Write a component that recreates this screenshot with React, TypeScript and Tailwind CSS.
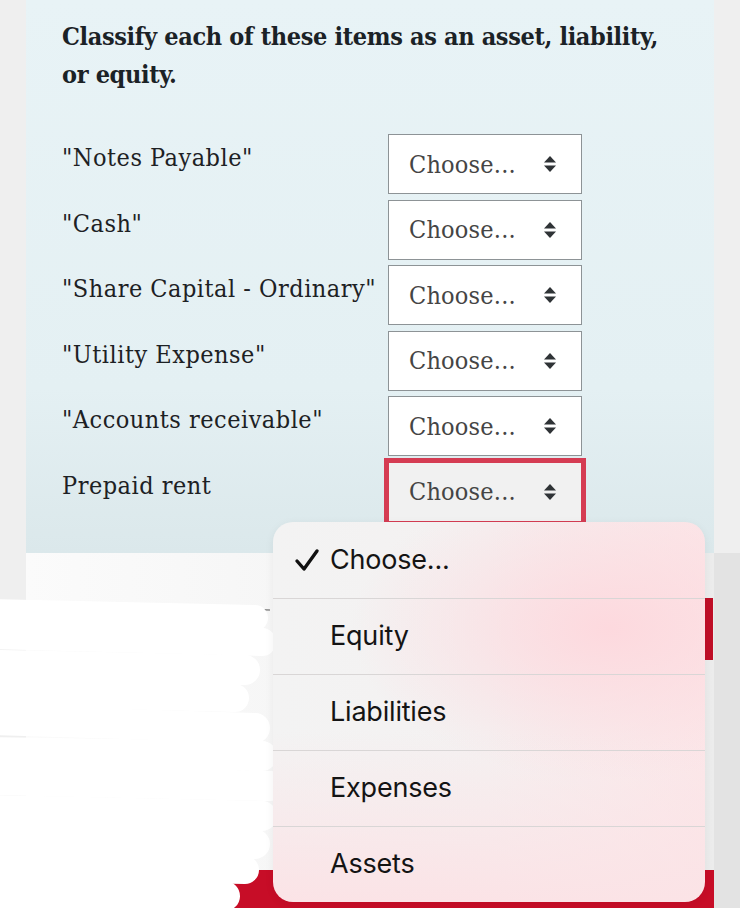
import React from "react";

const slab = { fontFamily: '"DejaVu Serif Condensed", "DejaVu Serif", serif', fontStretch: "condensed" as const };

const items = [
  '"Notes Payable"',
  '"Cash"',
  '"Share Capital - Ordinary"',
  '"Utility Expense"',
  '"Accounts receivable"',
  "Prepaid rent",
];

function Arrows() {
  return (
    <svg width="14" height="18" viewBox="0 0 14 18">
      <path d="M7 1 L13 7.5 L1 7.5 Z" fill="#2f3336" />
      <path d="M7 17 L13 10.5 L1 10.5 Z" fill="#2f3336" />
    </svg>
  );
}

function Select({ focused }: { focused?: boolean }) {
  return (
    <div
      className={
        "w-[194px] h-[60px] flex items-center justify-between pl-[20px] pr-[24px] border border-[#8d9396] " +
        (focused
          ? "bg-[#f1f1f1] outline outline-[5px] outline-[#d53c53] -outline-offset-[1px] border-[#d53c53]"
          : "bg-white")
      }
    >
      <span className="text-[25px] text-[#454545] leading-none tracking-[0.2px]" style={slab}>
        Choose...
      </span>
      <Arrows />
    </div>
  );
}

export default function App() {
  return (
    <div className="relative w-[740px] h-[908px] overflow-hidden bg-[#efefef]">
      <div className="flex flex-col h-full">
        <div className="mx-[26px] h-[553px] bg-[linear-gradient(to_bottom,#e8f3f6_0%,#e4f0f3_70%,#dbe8eb_100%)] px-[36px] pt-[18px]">
          <h1 className="text-[25px] font-bold leading-[38px] text-[#1b2226] tracking-[-0.35px]" style={slab}>
            Classify each of these items as an asset, liability,
            <br />
            or equity.
          </h1>
          <div className="mt-[40px] flex flex-col">
            {items.map((label, i) => (
              <div key={i} className="flex h-[65.5px]">
                <div
                  className="w-[326px] pt-[8px] text-[25px] leading-[32px] text-[#1d2124] whitespace-nowrap tracking-[0.5px]"
                  style={slab}
                >
                  {label}
                </div>
                <Select focused={i === 5} />
              </div>
            ))}
          </div>
        </div>
        <div className="relative flex-1 flex flex-col">
          <div className="flex-1 mx-[26px] bg-[linear-gradient(to_right,#fbfbfb_0%,#f3f3f3_60%,#ececec_100%)]" />
          <div className="h-[38px] ml-[26px] mr-[26px] bg-[#c70d27]" />
        </div>
      </div>

      {/* right gutter darker below panel */}
      <div className="absolute right-0 top-[553px] w-[26px] h-[355px] bg-[#e3e3e3]" />

      {/* redaction scribble */}
      <svg className="absolute left-0 top-[580px]" width="300" height="328" viewBox="0 0 300 328">
        <path d="M28 22 L270 30" stroke="#8a8a8a" strokeWidth="1.5" />
        <g stroke="#ffffff" strokeLinecap="round" fill="none">
          <path d="M-10 32 L255 38" strokeWidth="26" />
          <path d="M-10 55 L262 62" strokeWidth="28" />
          <path d="M0 85 L245 90" strokeWidth="30" />
          <path d="M-10 112 L235 118" strokeWidth="28" />
          <path d="M-10 140 L255 148" strokeWidth="30" />
          <path d="M-10 172 L262 176" strokeWidth="30" />
          <path d="M-10 200 L270 206" strokeWidth="30" />
          <path d="M-10 230 L262 236" strokeWidth="30" />
          <path d="M-10 258 L255 264" strokeWidth="30" />
          <path d="M-10 285 L245 290" strokeWidth="28" />
          <path d="M-10 310 L225 316" strokeWidth="30" />
          <path d="M-10 332 L210 335" strokeWidth="28" />
        </g>
      </svg>

      {/* red scroll mark */}
      <div className="absolute left-[705px] top-[598px] w-[8px] h-[62px] bg-[#c00f27]" />

      {/* dropdown menu */}
      <div
        className="absolute left-[273px] top-[522px] w-[432px] h-[380px] rounded-[20px] overflow-hidden shadow-[0_2px_10px_rgba(0,0,0,0.06)] bg-[linear-gradient(to_bottom,rgba(251,226,229,0)_55%,#fbe3e6_100%),radial-gradient(ellipse_60%_40%_at_78%_28%,#fdd9de_0%,rgba(253,217,222,0)_100%),linear-gradient(to_right,#f3f3f3_0%,#f4f1f1_50%,#fbe7e9_100%)]"
        style={{ fontFamily: 'Inter, "Liberation Sans", sans-serif' }}
      >
        {["Choose...", "Equity", "Liabilities", "Expenses", "Assets"].map((t, i) => (
          <div
            key={t}
            className={"h-[76px] flex items-center " + (i > 0 ? "border-t border-[#d9d6d6]" : "")}
          >
            <div className="w-[57px] flex justify-end pr-[10px]">
              {i === 0 && (
                <svg width="26" height="24" viewBox="0 0 26 24">
                  <path d="M3 13 L10 21 L23 3" stroke="#111" strokeWidth="3.4" fill="none" strokeLinecap="round" strokeLinejoin="round" />
                </svg>
              )}
            </div>
            <span className="text-[27px] text-[#141414] tracking-[-0.2px]">{t}</span>
          </div>
        ))}
      </div>
    </div>
  );
}
